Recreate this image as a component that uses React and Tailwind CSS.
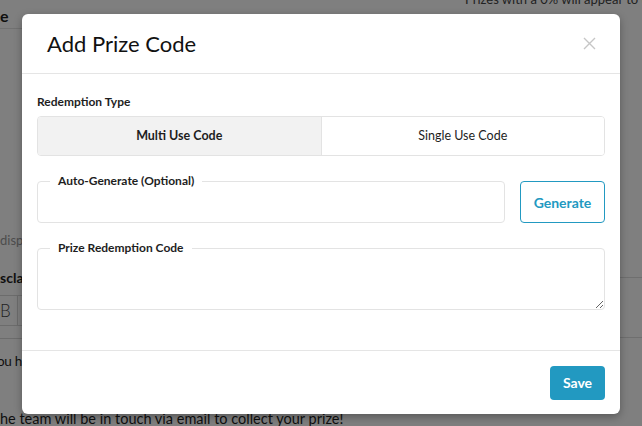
export default function App() {
  return (
    <div className="relative h-[426px] w-[642px] overflow-hidden bg-white font-['Lato','Noto_Sans',sans-serif] text-[#1e1e1e]">
      {/* background page */}
      <div className="grid grid-cols-2">
        <div className="flex flex-col">
          <div className="h-[29px] border-b border-[#e2e2e2] pt-[6px] text-[16px] font-bold leading-[20px]">
            e
          </div>
          <div className="mt-[203px] text-[13px] leading-[16px] text-[#9a9a9a]">disp</div>
          <div className="mt-[21px] text-[14px] font-bold leading-[18px]">sclai</div>
          <div className="mt-[8px] flex h-[31px] border-y border-[#d8d8d8]">
            <div className="flex w-[18px] items-center border-r border-[#d8d8d8] text-[17px] font-light leading-none text-[#444]">B</div>
          </div>
          <div className="h-[13px] border-b border-[#d8d8d8]" />
          <div className="-ml-[3px] mt-[12px] text-[13.5px] tracking-[-0.3px] leading-[20px]">ou ha</div>
          <div className="mt-[38px] whitespace-nowrap text-[14.5px] leading-[20px]">he team will be in touch via email to collect your prize!</div>
        </div>
        <div className="flex flex-col">
          <div className="-mt-[9px] ml-[144px] whitespace-nowrap text-[13px] leading-[16px] text-[#444]">Prizes with a 0% will appear to use a</div>
          <div className="mt-[270px] h-[61px] border-y border-[#dedede]" />
        </div>
      </div>

      {/* overlay */}
      <div className="absolute inset-0 bg-black/50" />

      {/* modal */}
      <div className="absolute left-[22px] top-[14px] flex h-[400px] w-[598px] flex-col rounded-[6px] bg-white shadow-[0_3px_9px_rgba(0,0,0,0.3)]">
        <div className="flex h-[60px] shrink-0 items-center justify-between border-b border-[#e5e5e5] pl-[25px] pr-[24px]">
          <h2 className="text-[22px] leading-[28px] text-[#111]">Add Prize Code</h2>
          <button className="flex h-[14px] w-[14px] items-center justify-center">
            <svg width="13" height="13" viewBox="0 0 13 13" fill="none">
              <path d="M1 1L12 12M12 1L1 12" stroke="#c6c6c6" strokeWidth="1.4" />
            </svg>
          </button>
        </div>

        <div className="flex flex-1 flex-col px-[15px] pt-[20px]">
          <div className="text-[12px] font-bold leading-[15px] text-[#1e1e1e]">Redemption Type</div>
          <div className="mt-[7px] flex h-[40px] overflow-hidden rounded-[4px] border border-[#e3e3e3]">
            <div className="flex flex-1 items-center justify-center bg-[#f2f2f2] text-[12.5px] font-bold text-[#1e1e1e]">
              Multi Use Code
            </div>
            <div className="flex flex-1 items-center justify-center border-l border-[#e3e3e3] bg-white text-[12.5px] text-[#1e1e1e]">
              Single Use Code
            </div>
          </div>

          <div className="mt-[17px] flex items-end gap-[15px]">
            <fieldset className="min-w-0 flex-1 rounded-[4px] border border-[#e3e3e3]">
              <legend className="ml-[12px] px-[8px] text-[12px] font-bold leading-[16px] text-[#1e1e1e]">
                Auto-Generate (Optional)
              </legend>
              <input className="block h-[33px] w-full bg-transparent px-[12px] text-[13px] outline-none" />
            </fieldset>
            <button className="h-[42px] w-[85px] rounded-[4px] border border-[#2299c1] bg-white text-[14px] font-bold text-[#2299c1]">
              Generate
            </button>
          </div>

          <fieldset className="mt-[17px] min-w-0 rounded-[4px] border border-[#e3e3e3]">
            <legend className="ml-[12px] px-[8px] text-[12px] font-bold leading-[16px] text-[#1e1e1e]">
              Prize Redemption Code
            </legend>
            <textarea className="block h-[53px] w-full resize-y bg-transparent px-[12px] text-[13px] outline-none" />
          </fieldset>
        </div>

        <div className="flex h-[64px] shrink-0 items-center justify-end border-t border-[#e5e5e5] px-[15px]">
          <button className="h-[34px] w-[55px] rounded-[4px] bg-[#2299c1] text-[14px] font-bold text-white">
            Save
          </button>
        </div>
      </div>
    </div>
  );
}
